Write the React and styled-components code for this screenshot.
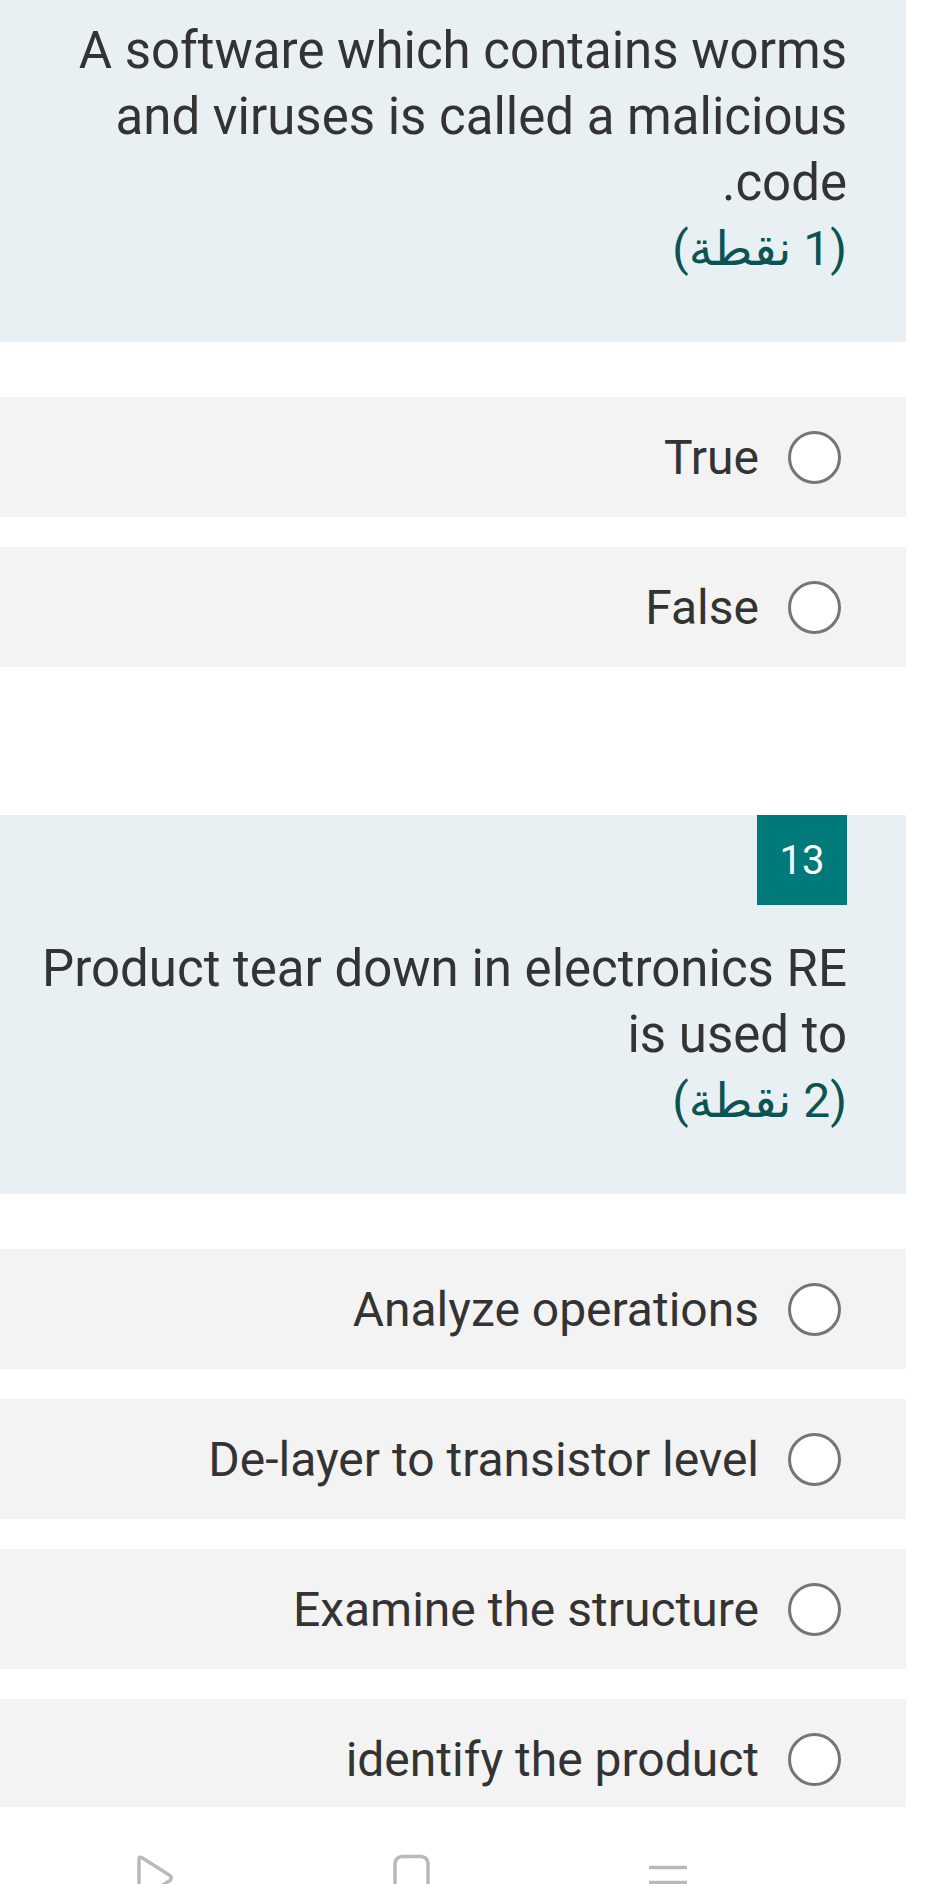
import React from "react";
import styled, { createGlobalStyle } from "styled-components";

const GlobalStyle = createGlobalStyle`
  html, body {
    margin: 0;
    padding: 0;
    background: #ffffff;
  }
  * {
    box-sizing: border-box;
  }
`;

const Screen = styled.div`
  width: 929px;
  height: 1884px;
  display: flex;
  flex-direction: column;
  overflow: hidden;
  background: #ffffff;
  font-family: Roboto, "DejaVu Sans", sans-serif;
`;

const Content = styled.div`
  flex: 1;
  overflow: hidden;
  width: 906px;
  display: flex;
  flex-direction: column;
`;

const QuestionCard = styled.div`
  background: #e8f0f3;
  display: flex;
  flex-direction: column;
  align-items: flex-start;
  padding: ${(p) => (p.$scrolled ? "18px" : "0")} 59px 60px 30px;
  margin-top: ${(p) => (p.$scrolled ? "0" : "148px")};
`;

const Badge = styled.div`
  width: 90px;
  height: 90px;
  background: #00797a;
  color: #ffffff;
  font-size: 40px;
  display: flex;
  align-items: center;
  justify-content: center;
  margin-bottom: 31px;
`;

const QuestionText = styled.div`
  font-size: 51px;
  line-height: 66px;
  color: #333333;
  text-align: start;
`;

const Points = styled.div`
  font-size: 48px;
  line-height: 66px;
  color: #0c5453;
`;

const OptionList = styled.div`
  display: flex;
  flex-direction: column;
  gap: 30px;
  margin-top: 55px;
`;

const Option = styled.div`
  background: #f3f3f3;
  height: 120px;
  flex-shrink: 0;
  display: flex;
  align-items: center;
  gap: 29px;
  padding-inline-start: 65px;
  font-size: 48px;
  color: #333333;
`;

const Radio = styled.span`
  width: 53px;
  height: 53px;
  flex-shrink: 0;
  border-radius: 50%;
  border: 3px solid #757575;
  background: #ffffff;
`;

const NavBar = styled.div`
  height: 77px;
  flex-shrink: 0;
  background: #ffffff;
  display: flex;
  align-items: flex-start;
  gap: 219px;
  padding: 47px 0 0 136px;
  overflow: hidden;
`;

const NavIcon = styled.svg`
  display: block;
  flex-shrink: 0;
`;

const BackIcon = () => (
  <NavIcon width="38" height="48" viewBox="0 0 38 48">
    <path
      d="M3 5 Q3 2 6 3.8 L34 21.5 Q36.5 24 34 26.5 L6 44.2 Q3 46 3 43 Z"
      fill="none"
      stroke="#b9b9b9"
      strokeWidth="3.5"
      strokeLinejoin="round"
    />
  </NavIcon>
);

const HomeIcon = () => (
  <NavIcon width="37" height="46" viewBox="0 0 37 46">
    <rect
      x="2"
      y="2.5"
      width="33"
      height="41"
      rx="7"
      fill="none"
      stroke="#b9b9b9"
      strokeWidth="3.5"
    />
  </NavIcon>
);

const RecentsIcon = () => (
  <NavIcon width="38" height="46" viewBox="0 0 38 46">
    <g stroke="#b9b9b9" strokeWidth="3.5">
      <line x1="0" y1="13.5" x2="38" y2="13.5" />
      <line x1="0" y1="28.5" x2="38" y2="28.5" />
      <line x1="0" y1="43.5" x2="38" y2="43.5" />
    </g>
  </NavIcon>
);

const questions = [
  {
    id: 12,
    scrolled: true,
    text: "A software which contains worms and viruses is called a malicious code.",
    points: "(1 نقطة)",
    options: ["True", "False"],
  },
  {
    id: 13,
    badge: "13",
    text: "Product tear down in electronics RE is used to",
    points: "(2 نقطة)",
    options: [
      "Analyze operations",
      "De-layer to transistor level",
      "Examine the structure",
      "identify the product",
    ],
  },
];

const App = () => (
  <>
    <GlobalStyle />
    <Screen>
      <Content dir="rtl">
        {questions.map((q) => (
          <React.Fragment key={q.id}>
            <QuestionCard $scrolled={q.scrolled}>
              {q.badge && <Badge>{q.badge}</Badge>}
              <QuestionText>{q.text}</QuestionText>
              <Points>{q.points}</Points>
            </QuestionCard>
            <OptionList>
              {q.options.map((o) => (
                <Option key={o}>
                  <Radio />
                  <span>{o}</span>
                </Option>
              ))}
            </OptionList>
          </React.Fragment>
        ))}
      </Content>
      <NavBar>
        <BackIcon />
        <HomeIcon />
        <RecentsIcon />
      </NavBar>
    </Screen>
  </>
);

export default App;
